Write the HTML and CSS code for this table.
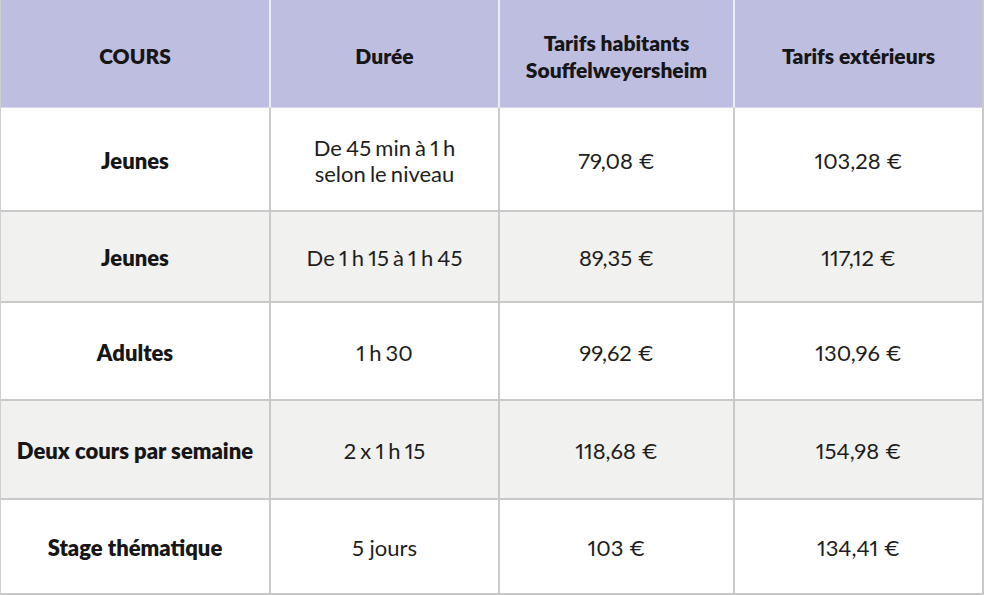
FILE: index.html
```html
<!DOCTYPE html>
<html lang="fr">
<head>
<meta charset="utf-8">
<title>Tarifs des cours</title>
<link rel="stylesheet" href="styles.css">
</head>
<body>
<div class="table">
  <div class="row head">
    <div class="cell">COURS</div>
    <div class="cell">Durée</div>
    <div class="cell">Tarifs habitants<br>Souffelweyersheim</div>
    <div class="cell">Tarifs extérieurs</div>
  </div>
  <div class="row r1">
    <div class="cell label">Jeunes</div>
    <div class="cell tight">De 45 min à 1 h<br>selon le niveau</div>
    <div class="cell">79,08 €</div>
    <div class="cell">103,28 €</div>
  </div>
  <div class="row r2 alt">
    <div class="cell label">Jeunes</div>
    <div class="cell tight">De 1 h 15 à 1 h 45</div>
    <div class="cell">89,35 €</div>
    <div class="cell">117,12 €</div>
  </div>
  <div class="row r3">
    <div class="cell label">Adultes</div>
    <div class="cell tight">1 h 30</div>
    <div class="cell">99,62 €</div>
    <div class="cell">130,96 €</div>
  </div>
  <div class="row r4 alt">
    <div class="cell label">Deux cours par semaine</div>
    <div class="cell tight">2 x 1 h 15</div>
    <div class="cell">118,68 €</div>
    <div class="cell">154,98 €</div>
  </div>
  <div class="row r5">
    <div class="cell label">Stage thématique</div>
    <div class="cell">5 jours</div>
    <div class="cell">103 €</div>
    <div class="cell">134,41 €</div>
  </div>
</div>
</body>
</html>
```
FILE: styles.css
```css
* { box-sizing: border-box; }
html, body { margin: 0; padding: 0; background: #ffffff; }
body {
  font-family: Lato, "Open Sans", sans-serif;
  color: #1e1e1e;
  width: 984px;
  height: 595px;
  overflow: hidden;
  font-variant-numeric: proportional-nums;
}
.table {
  display: flex;
  flex-direction: column;
  border-left: 1px solid #cfcfcf;
}
.row {
  display: grid;
  grid-template-columns: 270px 229px 235px 249px;
}
.cell {
  display: flex;
  align-items: center;
  justify-content: center;
  text-align: center;
  font-size: 22px;
  line-height: 26px;
  padding-top: 3px;
  border-right: 2px solid #c9c9c9;
  border-bottom: 2px solid #c9c9c9;
}
.tight { word-spacing: -1.5px; }
.head { height: 108px; background: #bebee0; }
.head .cell {
  font-weight: 800;
  font-size: 21px;
  color: #161616;
  border-right-color: #ececf6;
  border-bottom: 1px solid #d4d4e6;
  line-height: 27px;
  padding-top: 4px;
}
.head .cell:last-child { border-right-color: #c9c9c9; }
.label { font-weight: 800; color: #161616; }
.alt { background: #f1f1ef; }
.r1 { height: 104px; }
.r2 { height: 91px; }
.r3 { height: 98px; }
.r4 { height: 99px; }
.r5 { height: 95px; }
```
